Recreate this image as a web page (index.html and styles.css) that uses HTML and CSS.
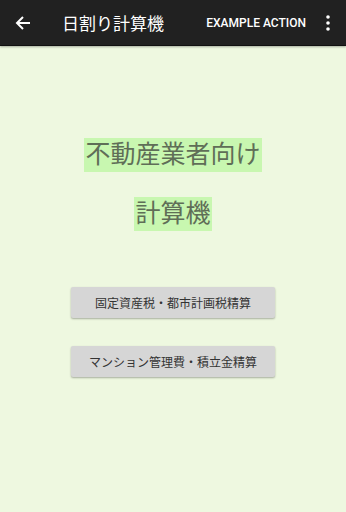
FILE: index.html
```html
<!DOCTYPE html>
<html>
<head lang="ja">
    <meta charset="UTF-8">
    <link rel="stylesheet" href="styles.css">
    <title>日割り計算機</title>
</head>
<body>
<div class="toolbar">
    <span class="back">
        <svg width="16" height="16" viewBox="0 0 16 16">
            <path d="M15 8H2M8 2L2 8l6 6" fill="none" stroke="#fff" stroke-width="2"/>
        </svg>
    </span>
    <span class="title">日割り計算機</span>
    <span class="action">EXAMPLE ACTION</span>
    <span class="more">
        <svg width="4" height="16" viewBox="0 0 4 16">
            <circle cx="2" cy="2" r="1.8" fill="#fff"/>
            <circle cx="2" cy="8" r="1.8" fill="#fff"/>
            <circle cx="2" cy="14" r="1.8" fill="#fff"/>
        </svg>
    </span>
</div>

<div class="content">
    <div class="heading">不動産業者向け</div>
    <div class="heading second">計算機</div>

    <button class="calc first">固定資産税・都市計画税精算</button>
    <button class="calc">マンション管理費・積立金精算</button>
</div>
</body>
</html>
```

FILE: styles.css
```css
html, body {
    margin: 0;
    padding: 0;
    height: 100%;
}
body {
    background: #eef8e0;
    font-family: Roboto, "Noto Sans CJK JP", sans-serif;
}
.toolbar {
    height: 45px;
    background: #212121;
    border-bottom: 1px solid #111;
    box-shadow: 0 1px 2px rgba(0,0,0,0.3);
    display: flex;
    align-items: center;
    color: #fff;
}
.back {
    width: 16px;
    height: 16px;
    margin-left: 15px;
    display: flex;
}
.title {
    font-size: 17px;
    margin-left: 31px;
    flex: 1;
}
.action {
    font-size: 12px;
    font-weight: 500;
    margin-right: 20px;
}
.more {
    display: flex;
    margin-right: 16px;
}
.content {
    display: flex;
    flex-direction: column;
    align-items: center;
    padding-top: 92px;
}
.heading {
    background: #c8f7b0;
    color: #5f6e57;
    font-size: 25px;
    line-height: 34px;
    height: 34px;
    padding: 0 1px;
}
.second {
    margin-top: 25px;
}
.calc {
    width: 204px;
    height: 31px;
    border: none;
    border-radius: 2px;
    background: #d6d6d6;
    box-shadow: 0 1px 2px rgba(0,0,0,0.3);
    font-family: Roboto, "Noto Sans CJK JP", sans-serif;
    font-size: 12px;
    color: #333;
    padding: 0;
    margin-top: 28px;
}
.calc.first {
    margin-top: 56px;
}
```
